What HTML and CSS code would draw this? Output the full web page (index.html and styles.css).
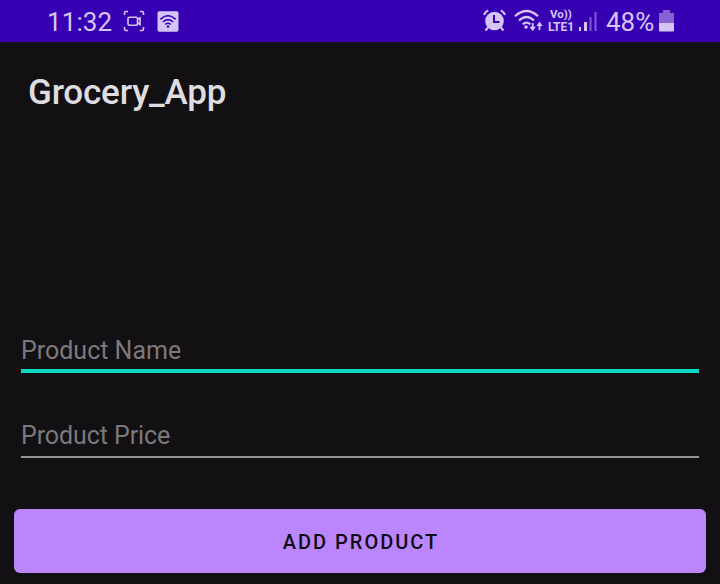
FILE: index.html
```html
<!DOCTYPE html>
<html lang="en">
<head>
<meta charset="utf-8">
<title>Grocery_App</title>
<link rel="stylesheet" href="styles.css">
</head>
<body>
<header class="status">
  <div class="group">
    <span class="clock">11:32</span>
    <svg class="record" width="22" height="22" viewBox="0 0 22 22" fill="none" stroke="currentColor" stroke-width="1.6">
      <path d="M1.5 5V3q0-1.5 1.5-1.5h2M17 1.5h2q1.5 0 1.5 1.5v2M1.5 17v2q0 1.5 1.5 1.5h2M17 20.5h2q1.5 0 1.5-1.5v-2"/>
      <rect x="5" y="7.3" width="9.5" height="8" rx="1.5"/><path d="M14.5 9.5l2.5-1.5v6.5l-2.5-1.5"/>
    </svg>
    <svg class="hotspot" width="22" height="21" viewBox="0 0 22 21">
      <rect x="0.5" y="0.3" width="21" height="20.4" rx="1.8" fill="currentColor"/>
      <g fill="none" stroke="#3700b3" stroke-width="1.6"><path d="M3.3 8.3Q11 1.2 18.7 8.3M5.8 11Q11 6.2 16.2 11M8.2 13.5Q11 11 13.8 13.5"/></g>
      <circle cx="11" cy="15.5" r="1.2" fill="#3700b3"/>
    </svg>
  </div>
  <div class="group">
    <svg class="alarm" width="23" height="23" viewBox="0 0 23 23" fill="none" stroke="currentColor">
      <circle cx="11.5" cy="12" r="9.3" fill="currentColor" stroke="none"/>
      <path d="M1 6Q2 3 5.2 1.3M22 6Q21 3 17.8 1.3M5.5 18l-3 3.5M17.5 18l3 3.5" stroke-width="2"/>
      <path d="M11 6v7h5.5" stroke="#3700b3" stroke-width="2"/>
    </svg>
    <svg class="wifi" width="29" height="24" viewBox="0 0 29 24" fill="none" stroke="currentColor" stroke-width="2.2">
      <path d="M1 7.2Q12.5-3.2 24 7.2M5 11.5Q12.5 4.5 20 11.5M8.7 15.3Q12.5 12 16.3 15.3"/>
      <circle cx="12" cy="18" r="1.8" fill="currentColor" stroke="none"/>
      <path d="M18.7 14v7M25.5 21v-7" stroke-width="1.8"/>
      <path d="M15.5 17.8h6.4l-3.2 4.2zM22.3 17h6.4l-3.2-4.2z" fill="currentColor" stroke="none"/>
    </svg>
    <div class="volte"><span class="vo">Vo))</span><span class="lte">LTE1</span></div>
    <svg class="signal" width="20" height="21" viewBox="0 0 20 21" fill="currentColor">
      <path d="M1 16h2v4H1zM6 11h3v9H6z"/><path d="M11.5 6h2v14h-2zM16.5 1h2v19h-2z" opacity=".45"/>
    </svg>
    <span class="percent">48%</span>
    <svg class="battery" width="15" height="22" viewBox="0 0 15 22" fill="currentColor">
      <path d="M4 0h7v3h4v11H0V3h4z" opacity=".5"/><path d="M0 13h15v7.5q0 1-1 1H1q-1 0-1-1z"/>
    </svg>
  </div>
</header>
<main>
  <h1>Grocery_App</h1>
  <form>
    <div class="field active"><span class="hint">Product Name</span></div>
    <div class="field"><span class="hint price">Product Price</span></div>
    <button type="button">ADD PRODUCT</button>
  </form>
</main>
</body>
</html>
```
FILE: styles.css
```css
* { box-sizing: border-box; }
body { margin: 0; height: 584px; overflow: hidden; background: #121013; font-family: Roboto, sans-serif; }
.status { height: 42px; padding: 0 46px 0 47px; display: flex; justify-content: space-between; background: #3700b3; color: #d5c5f3; }
.group { display: flex; align-items: flex-start; }
svg { display: block; flex: none; }
.clock, .percent { font-size: 26px; line-height: 30px; margin-top: 7px; white-space: nowrap; }
.clock { width: 66px; letter-spacing: 0.1px; }
.record { margin: 10px 0 0 10px; }
.hotspot { margin: 11px 0 0 12px; }
.alarm { margin-top: 9px; }
.wifi { margin: 9px 0 0 8px; }
.volte { width: 28px; margin: 8px 0 0 4px; display: flex; flex-direction: column; align-items: center; font-weight: 700; font-size: 12px; white-space: nowrap; }
.vo { font-size: 11.5px; line-height: 12px; }
.lte { line-height: 15px; }
.signal { margin: 11px 0 0 3px; }
.percent { width: 50px; margin-left: 8px; }
.battery { margin: 10px 0 0 3px; }
main { padding: 30px 14px 0; }
h1 { margin: 0 0 0 14px; font-size: 35px; line-height: 42px; font-weight: 500; letter-spacing: -0.2px; color: #dfdde0; }
form { margin-top: 217px; }
.field { height: 42px; margin: 0 7px 43px; border-bottom: 2px solid #929193; }
.field.active { border-bottom: 4px solid #0bdac4; }
.field + .field { margin-bottom: 51px; }
.hint { display: block; font-size: 25px; line-height: 30px; padding-top: 5px; color: #7b797c; }
.price { letter-spacing: -0.08px; }
button { display: block; width: 100%; height: 64px; border: 0; border-radius: 6px; padding: 2px 0 0 2px; background: #bb86fc; color: #100c14; font: 500 20px/24px Roboto, sans-serif; letter-spacing: 2px; }
```
